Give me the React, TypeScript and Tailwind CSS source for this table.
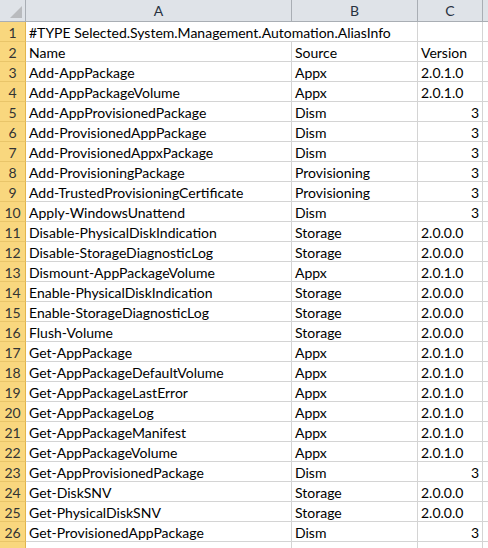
import React from "react";

type Row = { name: string; source: string; version: string };

const rows: Row[] = [
  { name: "#TYPE Selected.System.Management.Automation.AliasInfo", source: "", version: "" },
  { name: "Name", source: "Source", version: "Version" },
  { name: "Add-AppPackage", source: "Appx", version: "2.0.1.0" },
  { name: "Add-AppPackageVolume", source: "Appx", version: "2.0.1.0" },
  { name: "Add-AppProvisionedPackage", source: "Dism", version: "3" },
  { name: "Add-ProvisionedAppPackage", source: "Dism", version: "3" },
  { name: "Add-ProvisionedAppxPackage", source: "Dism", version: "3" },
  { name: "Add-ProvisioningPackage", source: "Provisioning", version: "3" },
  { name: "Add-TrustedProvisioningCertificate", source: "Provisioning", version: "3" },
  { name: "Apply-WindowsUnattend", source: "Dism", version: "3" },
  { name: "Disable-PhysicalDiskIndication", source: "Storage", version: "2.0.0.0" },
  { name: "Disable-StorageDiagnosticLog", source: "Storage", version: "2.0.0.0" },
  { name: "Dismount-AppPackageVolume", source: "Appx", version: "2.0.1.0" },
  { name: "Enable-PhysicalDiskIndication", source: "Storage", version: "2.0.0.0" },
  { name: "Enable-StorageDiagnosticLog", source: "Storage", version: "2.0.0.0" },
  { name: "Flush-Volume", source: "Storage", version: "2.0.0.0" },
  { name: "Get-AppPackage", source: "Appx", version: "2.0.1.0" },
  { name: "Get-AppPackageDefaultVolume", source: "Appx", version: "2.0.1.0" },
  { name: "Get-AppPackageLastError", source: "Appx", version: "2.0.1.0" },
  { name: "Get-AppPackageLog", source: "Appx", version: "2.0.1.0" },
  { name: "Get-AppPackageManifest", source: "Appx", version: "2.0.1.0" },
  { name: "Get-AppPackageVolume", source: "Appx", version: "2.0.1.0" },
  { name: "Get-AppProvisionedPackage", source: "Dism", version: "3" },
  { name: "Get-DiskSNV", source: "Storage", version: "2.0.0.0" },
  { name: "Get-PhysicalDiskSNV", source: "Storage", version: "2.0.0.0" },
  { name: "Get-ProvisionedAppPackage", source: "Dism", version: "3" },
];

// plain numbers are right aligned like Excel does
const isNumber = (v: string) => /^\d+$/.test(v);

export default function App() {
  return (
    <div className="w-[488px] h-[548px] overflow-hidden bg-white text-black font-['Lato','Liberation_Sans',sans-serif] text-[14px] leading-none">
      {/* column headers */}
      <div className="flex h-[22px] bg-[#dfe3e8] border-b border-[#a9aeb4]">
        <div className="relative w-[26px] shrink-0 border-r border-[#a9aeb4] bg-[#dfe3e8]">
          <div className="absolute right-[3px] bottom-[3px] w-0 h-0 border-l-[12px] border-l-transparent border-b-[12px] border-b-[#b9bbbe]" />
        </div>
        <div className="w-[266px] shrink-0 border-r border-[#a9aeb4] flex items-center justify-center pt-[1px] text-[#27313f]">A</div>
        <div className="w-[126px] shrink-0 border-r border-[#a9aeb4] flex items-center justify-center pt-[1px] text-[#27313f]">B</div>
        <div className="w-[65px] shrink-0 border-r border-[#a9aeb4] flex items-center justify-center pt-[1px] text-[#27313f]">C</div>
        <div className="flex-1" />
      </div>

      {rows.map((r, i) => (
        <div key={i} className="flex h-[20px]">
          <div className="w-[26px] shrink-0 bg-[#f9d77e] border-r border-r-[#e2b54d] border-b border-b-[#e9c56a] flex items-center justify-center pt-[2px] text-[#333]">
            {i + 1}
          </div>
          {i === 0 ? (
            <div className="w-[392px] shrink-0 border-r border-b border-[#d4d4d4] flex items-center pl-[3px] pt-[2px] whitespace-nowrap">
              {r.name}
            </div>
          ) : (
            <>
              <div className="w-[266px] shrink-0 border-r border-b border-[#d4d4d4] flex items-center pl-[3px] pt-[2px] whitespace-nowrap overflow-hidden">
                {r.name}
              </div>
              <div className="w-[126px] shrink-0 border-r border-b border-[#d4d4d4] flex items-center pl-[3px] pt-[2px] whitespace-nowrap">
                {r.source}
              </div>
            </>
          )}
          <div
            className={
              isNumber(r.version)
                ? "w-[65px] shrink-0 border-r border-b border-[#d4d4d4] flex items-center justify-end pr-[3px] pt-[2px]"
                : "w-[65px] shrink-0 border-r border-b border-[#d4d4d4] flex items-center pl-[3px] pt-[2px]"
            }
          >
            {r.version}
          </div>
          <div className="flex-1 border-b border-[#d4d4d4]" />
        </div>
      ))}

      <div className="flex h-[20px]">
        <div className="w-[26px] shrink-0 bg-[#f9d77e] border-r border-r-[#e2b54d]" />
        <div className="w-[266px] shrink-0 border-r border-[#d4d4d4]" />
        <div className="w-[126px] shrink-0 border-r border-[#d4d4d4]" />
        <div className="w-[65px] shrink-0 border-r border-[#d4d4d4]" />
      </div>
    </div>
  );
}
